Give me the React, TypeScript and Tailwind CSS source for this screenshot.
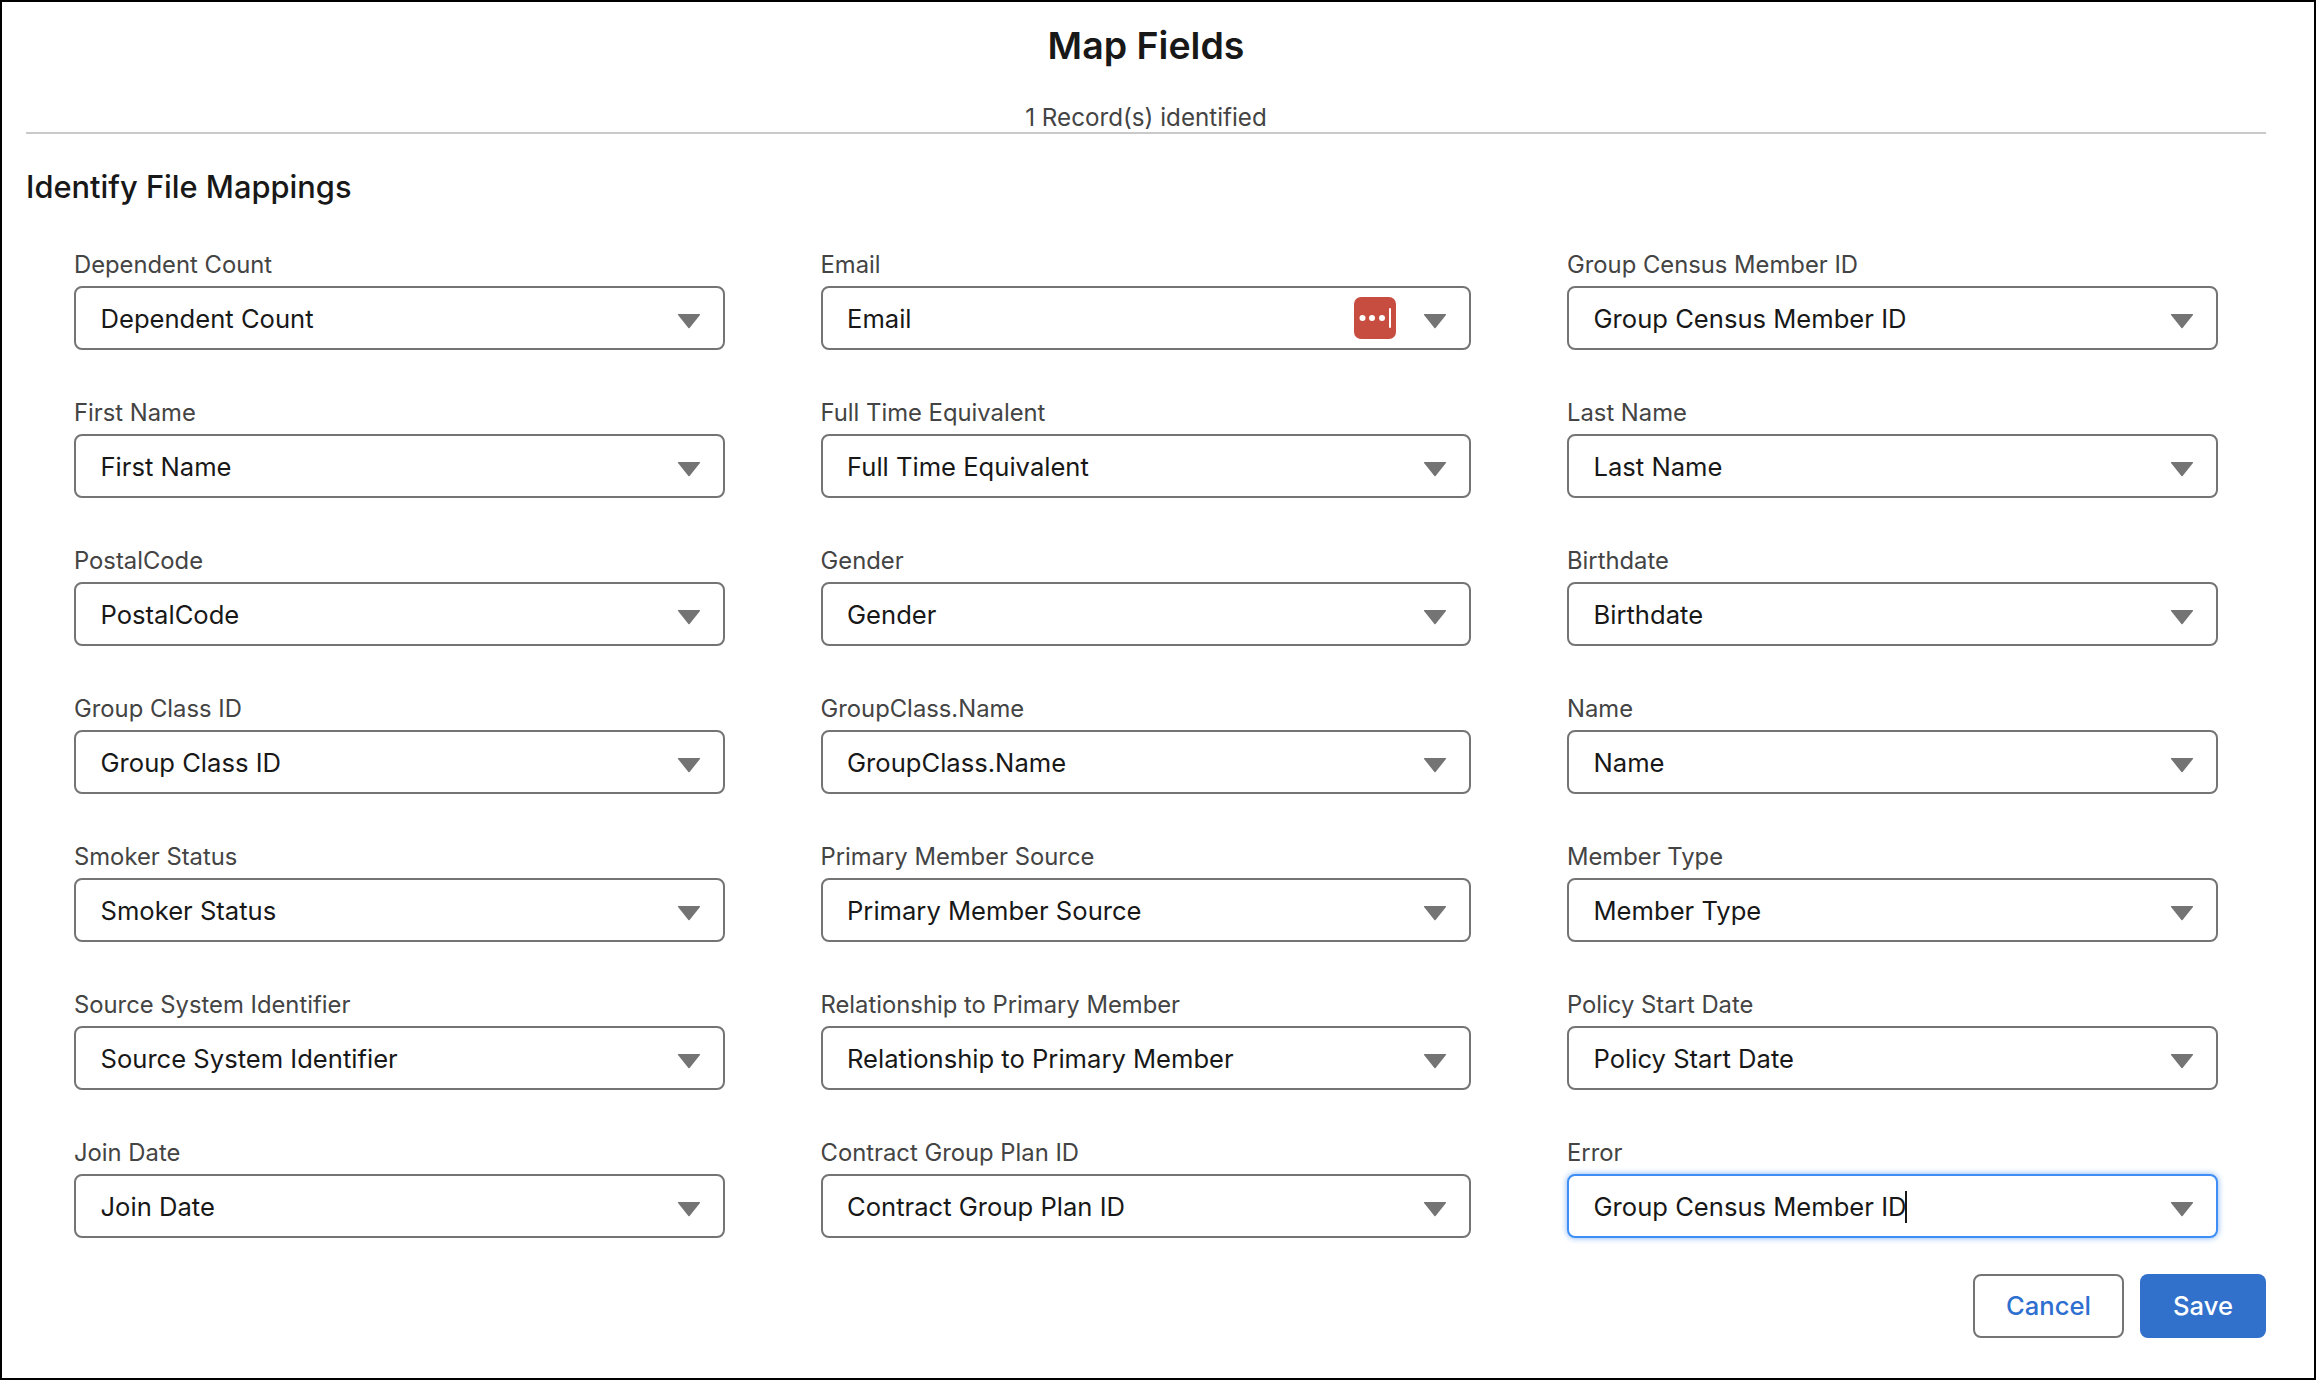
const rows: string[][] = [
  ["Dependent Count", "Email", "Group Census Member ID"],
  ["First Name", "Full Time Equivalent", "Last Name"],
  ["PostalCode", "Gender", "Birthdate"],
  ["Group Class ID", "GroupClass.Name", "Name"],
  ["Smoker Status", "Primary Member Source", "Member Type"],
  ["Source System Identifier", "Relationship to Primary Member", "Policy Start Date"],
  ["Join Date", "Contract Group Plan ID", "Error"],
];

function Caret() {
  return (
    <svg width="24" height="16" viewBox="0 0 24 16" className="shrink-0 mt-[7px]">
      <path d="M1.5 1h21a.6.6 0 0 1 .45 1L12.6 15a.8.8 0 0 1-1.2 0L1.05 2a.6.6 0 0 1 .45-1z" fill="#747474" />
    </svg>
  );
}

function PassIcon() {
  return (
    <svg width="42" height="42" viewBox="0 0 42 42" className="shrink-0 mr-[27px]">
      <rect width="42" height="42" rx="7" fill="#c84d41" />
      <circle cx="8.5" cy="21" r="3" fill="#fff" />
      <circle cx="18" cy="21" r="3" fill="#fff" />
      <circle cx="28" cy="21" r="3" fill="#fff" />
      <rect x="35" y="11" width="2" height="20" rx="1" fill="#fff" />
    </svg>
  );
}

function Field({ label }: { label: string }) {
  const isError = label === "Error";
  const value = isError ? "Group Census Member ID" : label;
  return (
    <div className="flex flex-col">
      <label className="h-[36px] text-[23.8px] leading-[30px] text-[#444444]">{label}</label>
      <div
        className={
          isError
            ? "flex h-[63.5px] items-center rounded-[8px] border-2 border-[#3f8ef5] bg-white pl-[24.5px] pr-[22px] shadow-[0_0_6px_#7fb2f5]"
            : "flex h-[63.5px] items-center rounded-[8px] border-2 border-[#747474] bg-white pl-[24.5px] pr-[22px]"
        }
      >
        <span className="flex flex-1 items-center pt-[2px] text-[25.6px] text-[#181818]">
          {value}
          {isError && <span className="ml-[-1px] inline-block h-[32px] w-[2px] bg-[#181818]" />}
        </span>
        {label === "Email" && <PassIcon />}
        <Caret />
      </div>
    </div>
  );
}

export default function App() {
  return (
    <div className="flex h-[1380px] w-[2316px] flex-col border-2 border-black bg-white pl-[24px] pr-[48px] font-['Inter',sans-serif] text-[#181818]">
      <header className="flex h-[132px] flex-col items-center border-b-2 border-[#c9c9c9]">
        <h1 className="mt-[19px] text-[37.5px] font-semibold leading-[50px] text-[#181818]">Map Fields</h1>
        <p className="mt-[32px] text-[24.2px] leading-[30px] text-[#444444]">1 Record(s) identified</p>
      </header>
      <h2 className="mt-[33px] text-[30.8px] font-medium leading-[40px] text-[#181818]">Identify File Mappings</h2>
      <div className="mt-[43px] grid grid-cols-[650.5px_650.5px_650.5px] gap-x-[96px] gap-y-[48.5px] pl-[48px]">
        {rows.flat().map((label) => (
          <Field key={label} label={label} />
        ))}
      </div>
      <div className="mt-[36.5px] flex justify-end gap-[16px]">
        <button className="h-[64px] w-[151px] rounded-[8px] border-2 border-[#747474] bg-white pt-[1px] text-[25.6px] font-medium text-[#2e6fcf]">
          Cancel
        </button>
        <button className="h-[64px] w-[126px] rounded-[8px] bg-[#3170cb] pt-[1px] text-[25.6px] font-medium text-white">Save</button>
      </div>
    </div>
  );
}
